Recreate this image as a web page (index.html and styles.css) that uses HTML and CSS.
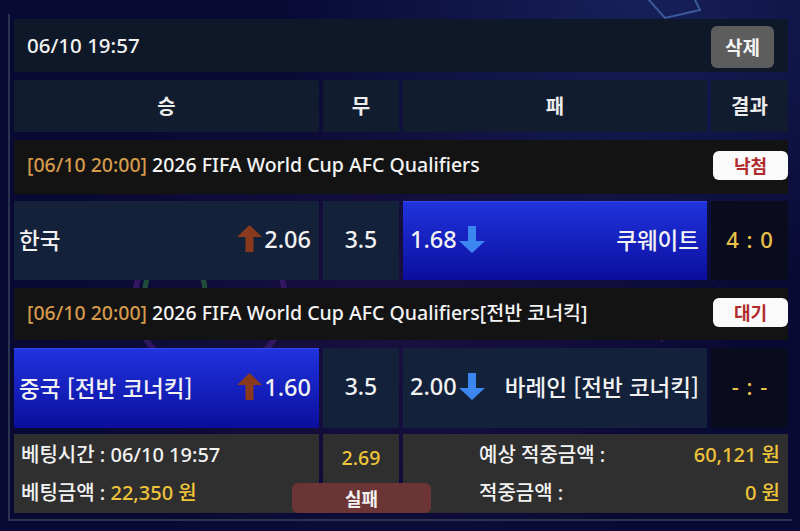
FILE: index.html
```html
<!DOCTYPE html>
<html lang="ko">
<head>
<meta charset="utf-8">
<title>Bet slip</title>
<link rel="stylesheet" href="styles.css">
</head>
<body>
<div class="bg">
  <svg class="deco" width="800" height="531" viewBox="0 0 800 531">
    <circle cx="210" cy="300" r="75" fill="none" stroke="#3a1a6a" stroke-width="6" opacity="0.8"/>
    <circle cx="175" cy="290" r="30" fill="none" stroke="#2a6a3a" stroke-width="5" opacity="0.7"/>
    <path d="M640 -10 L665 18 L700 10 L690 -10" fill="none" stroke="#3a5a9a" stroke-width="2"/>
    <path d="M660 340 L720 290 L770 330" fill="none" stroke="#4a1a6a" stroke-width="5" opacity="0.7"/>
  </svg>
  <div class="frame">
    <div class="top-row">
      <span class="stamp">06/10 19:57</span>
      <button class="del-btn">삭제</button>
    </div>

    <div class="grid head">
      <div class="hcell">승</div>
      <div class="hcell">무</div>
      <div class="hcell">패</div>
      <div class="hcell">결과</div>
    </div>

    <div class="match-head first">
      <span class="mtitle"><span class="mtime">[06/10 20:00]</span> 2026 FIFA World Cup AFC Qualifiers</span>
      <span class="badge">낙첨</span>
    </div>
    <div class="grid match m1">
      <div class="team">
        <span class="tname">한국</span>
        <span class="odds"><svg class="arrow" width="25" height="27" viewBox="0 0 25 27"><polygon points="12.5,0 25,12 16.5,12 16.5,27 8.5,27 8.5,12 0,12" fill="#8a3a1c"/></svg>2.06</span>
      </div>
      <div class="draw">3.5</div>
      <div class="team away selected">
        <span class="odds">1.68<svg class="arrow" width="26" height="27" viewBox="0 0 26 27"><polygon points="9,0 17,0 17,15 26,15 13,27 0,15 9,15" fill="#3c86f0"/></svg></span>
        <span class="tname">쿠웨이트</span>
      </div>
      <div class="result">4 : 0</div>
    </div>

    <div class="match-head second">
      <span class="mtitle"><span class="mtime">[06/10 20:00]</span> 2026 FIFA World Cup AFC Qualifiers[전반 코너킥]</span>
      <span class="badge">대기</span>
    </div>
    <div class="grid match m2">
      <div class="team selected">
        <span class="tname">중국 [전반 코너킥]</span>
        <span class="odds"><svg class="arrow" width="25" height="27" viewBox="0 0 25 27"><polygon points="12.5,0 25,12 16.5,12 16.5,27 8.5,27 8.5,12 0,12" fill="#8a3a1c"/></svg>1.60</span>
      </div>
      <div class="draw">3.5</div>
      <div class="team away">
        <span class="odds">2.00<svg class="arrow" width="26" height="27" viewBox="0 0 26 27"><polygon points="9,0 17,0 17,15 26,15 13,27 0,15 9,15" fill="#3c86f0"/></svg></span>
        <span class="tname">바레인 [전반 코너킥]</span>
      </div>
      <div class="result">- : -</div>
    </div>

    <div class="summary">
      <div class="sbox sleft">
        <div class="sline">베팅시간 : 06/10 19:57</div>
        <div class="sline">베팅금액 : <span class="yellow">22,350 원</span></div>
      </div>
      <div class="sbox smid"><span class="yellow">2.69</span></div>
      <div class="sbox sright">
        <div class="srow"><span>예상 적중금액 :</span><span class="yellow">60,121 원</span></div>
        <div class="srow"><span>적중금액 :</span><span class="yellow">0 원</span></div>
      </div>
      <div class="fail">실패</div>
    </div>
  </div>
</div>
</body>
</html>
```

FILE: styles.css
```css
* { box-sizing: border-box; }
html, body { margin: 0; padding: 0; }
body {
  width: 800px;
  height: 531px;
  overflow: hidden;
  font-family: "Noto Sans", "Noto Sans CJK KR", sans-serif;
  color: #f2f2f2;
  background: #0a0b36;
}
.bg {
  position: relative;
  width: 800px;
  height: 531px;
  padding-top: 14px;
  background:
    radial-gradient(ellipse at 80% 0%, #16205a 0%, rgba(10,11,54,0) 40%),
    radial-gradient(ellipse at 50% 60%, #1a1040 0%, rgba(10,11,54,0) 60%),
    #090a34;
}
.deco { position: absolute; left: 0; top: 0; }
.frame {
  position: relative;
  margin-left: 8px;
  width: 784px;
  height: 507px;
  padding: 5px 4px 0 4px;
  border-left: 2px solid #2c3350;
  border-bottom: 2px solid #2c3350;
  display: flex;
  flex-direction: column;
}
.top-row {
  height: 53px;
  background: #0e1829;
  display: flex;
  align-items: center;
  justify-content: space-between;
  padding: 0 14px 0 13px;
}
.stamp { font-size: 20.5px; font-weight: 500; margin-top: -2px; }
.del-btn {
  width: 63px;
  height: 42px;
  border: 0;
  border-radius: 6px;
  background: #5d5d5d;
  color: #f4f4f4;
  font-family: "Noto Sans CJK KR", sans-serif;
  font-size: 19px;
  font-weight: 700;
  padding: 0;
  margin-top: 2px;
}
.grid {
  display: grid;
  grid-template-columns: 305px 76px 304px 77px;
  column-gap: 4px;
}
.head { height: 52px; margin-top: 8px; }
.hcell {
  background: #111c2e;
  display: flex;
  align-items: center;
  justify-content: center;
  font-family: "Noto Sans CJK KR", sans-serif;
  font-size: 20px;
  font-weight: 700;
  color: #ececec;
  padding-bottom: 2px;
}
.match-head {
  background: #131313;
  display: flex;
  align-items: center;
  justify-content: space-between;
  padding: 0 0 0 13px;
  font-size: 19.5px;
  font-weight: 500;
}
.match-head.first { height: 54px; margin-top: 8px; }
.match-head.second { height: 52px; margin-top: 8px; }
.match-head + .match { margin-top: 7px; }
.match-head.second + .match { margin-top: 8px; }
.mtime { color: #d49a4c; }
.mtitle { color: #f4f4f4; margin-top: -5px; }
.badge {
  width: 75px;
  height: 29px;
  background: #fafafa;
  border-radius: 6px;
  color: #b02a2c;
  font-family: "Noto Sans CJK KR", sans-serif;
  font-weight: 700;
  font-size: 18px;
  display: flex;
  align-items: center;
  justify-content: center;
  margin-top: -4px;
}
.match.m1 { height: 79px; }
.match.m2 { height: 80px; }
.team {
  background: #13223a;
  display: flex;
  align-items: center;
  justify-content: space-between;
  padding: 0 8px 4px 5px;
  font-size: 22px;
  font-weight: 500;
}
.team.away { padding: 0 8px 4px 7px; }
.team.selected {
  background: linear-gradient(#2033de, #0b0e9c);
  border-top: 1px solid #3548e8;
}
.tname { font-family: "Noto Sans CJK KR", sans-serif; font-weight: 500; font-size: 22.5px; }
.odds {
  display: flex;
  align-items: center;
  font-size: 23.5px;
}
.arrow { display: block; margin: 0 2px; }
.draw {
  background: #13223a;
  display: flex;
  align-items: center;
  justify-content: center;
  font-size: 23px;
  font-weight: 500;
  padding-bottom: 4px;
}
.result {
  background: #0a0b1c;
  display: flex;
  align-items: center;
  justify-content: center;
  color: #e9c24a;
  font-size: 22px;
  font-weight: 500;
  word-spacing: 2px;
  padding-bottom: 4px;
}
.summary {
  position: relative;
  margin-top: 6px;
  height: 79px;
  display: grid;
  grid-template-columns: 305px 76px 385px;
  column-gap: 4px;
}
.sbox { background: #2f2f2f; }
.sleft {
  padding: 6px 0 0 7px;
  display: flex;
  flex-direction: column;
  gap: 8px;
}
.sline { font-size: 20px; font-weight: 500; line-height: 30px; }
.yellow { color: #f0c43a; }
.smid {
  display: flex;
  justify-content: center;
  padding-top: 10px;
  font-size: 19.5px;
  font-weight: 500;
}
.sright {
  padding: 6px 8px 0 76px;
  display: flex;
  flex-direction: column;
  gap: 8px;
}
.srow {
  display: flex;
  justify-content: space-between;
  font-size: 20px;
  font-weight: 500;
  line-height: 30px;
}
.fail {
  position: absolute;
  left: 278px;
  top: 49px;
  width: 139px;
  height: 30px;
  border-radius: 6px;
  background: #6b3536;
  color: #f2f2f2;
  font-family: "Noto Sans CJK KR", sans-serif;
  font-size: 18px;
  font-weight: 700;
  display: flex;
  align-items: center;
  justify-content: center;
}
```
